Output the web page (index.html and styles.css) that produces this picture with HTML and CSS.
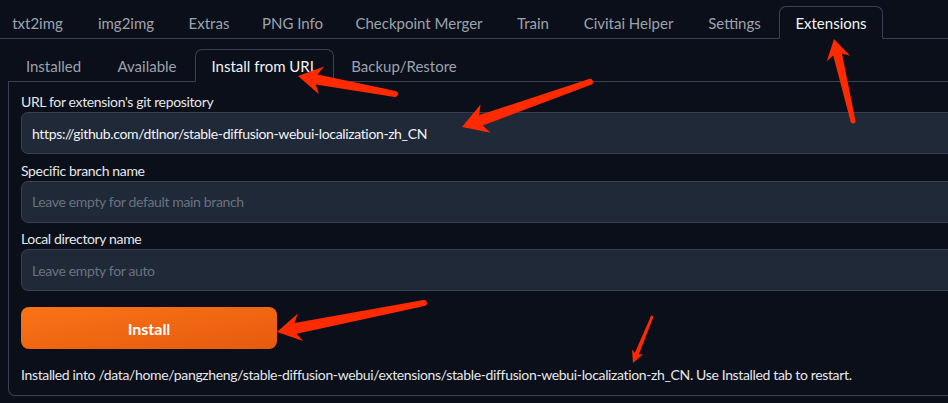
FILE: index.html
```html
<!DOCTYPE html>
<html lang="en">
<head>
<meta charset="utf-8">
<title>Extensions</title>
<link rel="stylesheet" href="styles.css">
</head>
<body>
<div class="app">
  <nav class="tabs top">
    <div class="tab w85 first">txt2img</div>
    <div class="tab w92">img2img</div>
    <div class="tab w74">Extras</div>
    <div class="tab w93">PNG Info</div>
    <div class="tab w160">Checkpoint Merger</div>
    <div class="tab w68">Train</div>
    <div class="tab w123">Civitai Helper</div>
    <div class="tab w89">Settings</div>
    <div class="tab w104 sel">Extensions</div>
  </nav>
  <div class="subwrap">
    <nav class="tabs sub">
      <div class="tab w91">Installed</div>
      <div class="tab w96">Available</div>
      <div class="tab w139 sel">Install from URL</div>
      <div class="tab w140">Backup/Restore</div>
    </nav>
    <section class="panel">
      <div class="field">
        <label>URL for extension's git repository</label>
        <div class="input">https://github.com/dtlnor/stable-diffusion-webui-localization-zh_CN</div>
      </div>
      <div class="field">
        <label>Specific branch name</label>
        <div class="input ph">Leave empty for default main branch</div>
      </div>
      <div class="field">
        <label>Local directory name</label>
        <div class="input ph">Leave empty for auto</div>
      </div>
      <button class="install">Install</button>
      <p class="result">Installed into /data/home/pangzheng/stable-diffusion-webui/extensions/stable-diffusion-webui-localization-zh_CN. Use Installed tab to restart.</p>
    </section>
  </div>
  <svg class="marks" width="948" height="403" viewBox="0 0 948 403">
    <g transform="translate(298 76) rotate(10.5)">
      <polygon points="0,0 24,-14 19,-5 98.7,-3 98.7,3 19,5 24,14"/>
      <circle cx="98.7" cy="0" r="3"/>
    </g>
    <g transform="translate(462 127) rotate(-19.4)">
      <polygon points="0,0 25,-15 20,-5.5 135.7,-3 135.7,3 20,5.5 25,15"/>
      <circle cx="135.7" cy="0" r="3"/>
    </g>
    <g transform="translate(834 39) rotate(76.95)">
      <polygon points="0,0 20,-12 16,-4.5 84.2,-2.5 84.2,2.5 16,4.5 20,12"/>
      <circle cx="84.2" cy="0" r="2.5"/>
    </g>
    <g transform="translate(277 332) rotate(-11.16)">
      <polygon points="0,0 24,-14 19,-5.5 149.8,-3 149.8,3 19,5.5 24,14"/>
      <circle cx="149.8" cy="0" r="3"/>
    </g>
    <g transform="translate(633 363) rotate(-67.6)">
      <polygon points="0,0 12,-6 10,-2.2 49.8,-1.3 49.8,1.3 10,2.2 12,6"/>
      <circle cx="49.8" cy="0" r="1.3"/>
    </g>
  </svg>
</div>
</body>
</html>
```
FILE: styles.css
```css
html, body {
  margin: 0;
  padding: 0;
  background: #0b0f19;
  overflow: hidden;
}
body {
  font-family: Lato, "Noto Sans", sans-serif;
  font-size: 14px;
  color: #e5e7eb;
}
.app {
  position: relative;
  width: 948px;
  height: 403px;
  overflow: hidden;
}
.tabs {
  display: flex;
  align-items: flex-end;
  border-bottom: 1px solid #374151;
}
.top {
  padding-top: 6px;
}
.tab {
  box-sizing: border-box;
  flex: none;
  height: 33px;
  margin-bottom: -1px;
  border: 1px solid transparent;
  border-radius: 7px 7px 0 0;
  display: flex;
  align-items: center;
  justify-content: center;
  color: #9ca3af;
  font-size: 15px;
  white-space: nowrap;
}
.tab.sel {
  border-color: #374151;
  border-bottom-color: #0b0f19;
  background: #0b0f19;
  color: #f3f4f6;
}
.tab.first { margin-left: -5px; }
.w68 { width: 68px; }
.w74 { width: 74px; }
.w85 { width: 85px; }
.w89 { width: 89px; }
.w91 { width: 91px; }
.w92 { width: 92px; }
.w93 { width: 93px; }
.w96 { width: 96px; }
.w104 { width: 104px; }
.w123 { width: 123px; }
.w139 { width: 139px; }
.w140 { width: 140px; }
.w160 { width: 160px; }

.subwrap {
  margin: 10px 0 0 8px;
  width: 1000px;
}
.panel {
  box-sizing: border-box;
  border: 1px solid #374151;
  border-top: none;
  border-radius: 0 0 7px 7px;
  padding: 10px 12px 10px;
  display: flex;
  flex-direction: column;
  align-items: flex-start;
  letter-spacing: -0.35px;
}
.field {
  display: flex;
  flex-direction: column;
  align-self: stretch;
}
.field + .field {
  margin-top: 6.5px;
}
.field label {
  line-height: 20px;
  color: #e5e7eb;
}
.input {
  box-sizing: border-box;
  height: 42px;
  border: 1px solid #374151;
  border-radius: 7px;
  background: #1f2937;
  padding: 0 10px;
  display: flex;
  align-items: center;
  color: #f3f4f6;
}
.input.ph {
  color: #6b7280;
}
.install {
  margin-top: 16px;
  width: 256px;
  height: 42px;
  border: none;
  border-radius: 8px;
  background: linear-gradient(to bottom right, #f97316, #e75a0e);
  color: #ffffff;
  font-family: inherit;
  font-size: 16px;
  font-weight: 700;
  letter-spacing: 0;
}
.result {
  margin: 16px 0 0;
  line-height: 20px;
  white-space: nowrap;
}
.marks {
  position: absolute;
  left: 0;
  top: 0;
  fill: #ff2a00;
  pointer-events: none;
}
```
